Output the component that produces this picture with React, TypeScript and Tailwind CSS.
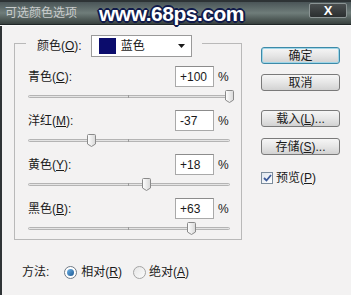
import React from 'react';

const font = { fontFamily: '"Liberation Sans", "Noto Sans CJK SC", sans-serif' };

const rows = [
  { name: '青色', key: 'C', value: '+100', pos: 100 },
  { name: '洋红', key: 'M', value: '-37', pos: -37 },
  { name: '黄色', key: 'Y', value: '+18', pos: 18 },
  { name: '黑色', key: 'B', value: '+63', pos: 63 },
];

function Thumb() {
  return (
    <svg width="9" height="13" viewBox="0 0 9 13">
      <defs>
        <linearGradient id="tg" x1="0" y1="0" x2="1" y2="0">
          <stop offset="0" stopColor="#ffffff" />
          <stop offset="1" stopColor="#d8d8d8" />
        </linearGradient>
      </defs>
      <path d="M1.5 0.5 H7.5 Q8.5 0.5 8.5 1.5 V10 L4.5 12.5 L0.5 10 V1.5 Q0.5 0.5 1.5 0.5 Z" fill="url(#tg)" stroke="#8a8a8a" />
    </svg>
  );
}

function SliderRow({ name, k, value, pos }: { name: string; k: string; value: string; pos: number }) {
  // track spans 201px, center at 100.5
  const left = 100.5 + pos * 1.005 - 4.5;
  return (
    <div className="flex flex-col">
      <div className="flex items-center h-[21px]">
        <span className="text-[12px] text-[#1a1a1a] w-[147px]">
          {name}(<u>{k}</u>):
        </span>
        <div className="w-[39px] h-[21px] bg-white border border-[#a9a9a9] border-t-[#8c8c8c] flex items-center pl-[4px] text-[12px] text-[#1a1a1a]">
          {value}
        </div>
        <span className="ml-[4px] text-[12px] text-[#1a1a1a]">%</span>
      </div>
      <div className="relative h-[13px] mt-[3px] w-[202px] flex items-center">
        <div className="w-full h-[3px] rounded-[2px] bg-[#e4e4e4] border border-[#b4b4b4]" />
        <div className="absolute left-[100px] top-[5px] w-[1px] h-[3px] bg-[#9a9a9a]" />
        <div className="absolute top-0" style={{ left }}>
          <Thumb />
        </div>
      </div>
    </div>
  );
}

function Button({ label, primary }: { label: React.ReactNode; primary?: boolean }) {
  return (
    <div
      className={`w-[79px] h-[17px] rounded-[3px] border flex items-center justify-center text-[12px] text-[#1a1a1a] bg-gradient-to-b from-[#f6f6f6] via-[#e6e6e6] to-[#d2d2d2] ${
        primary ? 'border-[#3d8aa8] shadow-[inset_0_0_0_1px_#9fd6e8]' : 'border-[#7a7a7a]'
      }`}
    >
      {label}
    </div>
  );
}

export default function App() {
  return (
    <div className="w-[351px] h-[295px] overflow-hidden bg-[#f3f2f2] flex flex-col" style={font}>
      {/* Title bar */}
      <div className="h-[2px] bg-[#2d3335]" />
      <div className="relative h-[23px] flex items-center bg-gradient-to-b from-[#4a5557] via-[#6f7d7a] to-[#38413f] border-b border-[#1f2526]">
        <span className="ml-[5px] text-[12px] text-[#c9cccc]">可选颜色选项</span>
        <span
          className="absolute left-[99px] top-[0px] text-[21px] font-bold text-white tracking-[-0.5px] leading-[24px]"
          style={{
            textShadow:
              '1px 1px 0 #101a4a, -1px -1px 0 #101a4a, 1px -1px 0 #101a4a, -1px 1px 0 #101a4a, 2px 0 0 #101a4a, -2px 0 0 #101a4a, 0 2px 0 #101a4a, 0 -2px 0 #101a4a',
          }}
        >
          www.68ps.com
        </span>
        <div className="ml-auto mr-[4px] mb-[6px] w-[38px] h-[15px] rounded-[2px] bg-gradient-to-b from-[#4a4f50] to-[#2b2f30] border border-[#8b9494] flex items-center justify-center text-white font-bold text-[13px] leading-none">
          X
        </div>
      </div>
      <div className="h-[1px] bg-[#fbfbfb]" />

      {/* Body */}
      <div className="flex-1 flex border-l-[2px] border-[#2f3436]">
        <div className="flex flex-col">
          <div className="relative mt-[17px] ml-[12px] w-[228px] h-[197px] border border-[#b9b9b9] pt-[22px] pl-[13px]">
            <div className="absolute left-[11px] -top-[9px] w-[176px] h-[22px] bg-[#f3f2f2] flex items-center">
              <span className="ml-[11px] text-[12px] text-[#1a1a1a]">
                颜色(<u>O</u>):
              </span>
              <div className="ml-[9px] w-[101px] h-[22px] bg-white border border-[#9a9a9a] flex items-center">
                <div className="ml-[7px] w-[17px] h-[16px] bg-[#0b0c6c]" />
                <span className="ml-[5px] text-[12px] text-[#1a1a1a]">蓝色</span>
                <svg className="ml-auto mr-[6px]" width="7" height="4" viewBox="0 0 7 4">
                  <path d="M0 0 H7 L3.5 4 Z" fill="#1a1a1a" />
                </svg>
              </div>
            </div>
            <div className="flex flex-col gap-[7px]">
              {rows.map((r) => (
                <SliderRow key={r.key} name={r.name} k={r.key} value={r.value} pos={r.pos} />
              ))}
            </div>
          </div>
          <div className="mt-[23px] ml-[20px] flex items-center text-[12px] text-[#1a1a1a]">
            <span>方法:</span>
            <div className="ml-[15px] w-[13px] h-[13px] rounded-full border border-[#6f7a86] bg-white flex items-center justify-center">
              <div className="w-[7px] h-[7px] rounded-full bg-gradient-to-br from-[#6fb3e6] to-[#1a5a95]" />
            </div>
            <span className="ml-[4px]">
              相对(<u>R</u>)
            </span>
            <div className="ml-[11px] w-[13px] h-[13px] rounded-full border border-[#a4a4a4] bg-gradient-to-br from-[#e6e6e6] to-[#fbfbfb]" />
            <span className="ml-[3px]">
              绝对(<u>A</u>)
            </span>
          </div>
        </div>

        <div className="ml-[19px] mt-[21px] flex flex-col">
          <Button label="确定" primary />
          <div className="mt-[10px]">
            <Button label="取消" />
          </div>
          <div className="mt-[19px]">
            <Button label={<span>载入(<u>L</u>)...</span>} />
          </div>
          <div className="mt-[11px]">
            <Button label={<span>存储(<u>S</u>)...</span>} />
          </div>
          <div className="mt-[14px] flex items-center text-[12px] text-[#1a1a1a]">
            <div className="w-[12px] h-[12px] border border-[#7b8c9c] bg-gradient-to-br from-[#dfe6ee] to-[#ffffff] flex items-center justify-center">
              <svg width="9" height="8" viewBox="0 0 9 8">
                <path d="M1 4 L3.5 6.5 L8 1" stroke="#3c5a9a" strokeWidth="1.8" fill="none" />
              </svg>
            </div>
            <span className="ml-[3px]">
              预览(<u>P</u>)
            </span>
          </div>
        </div>
      </div>
    </div>
  );
}
